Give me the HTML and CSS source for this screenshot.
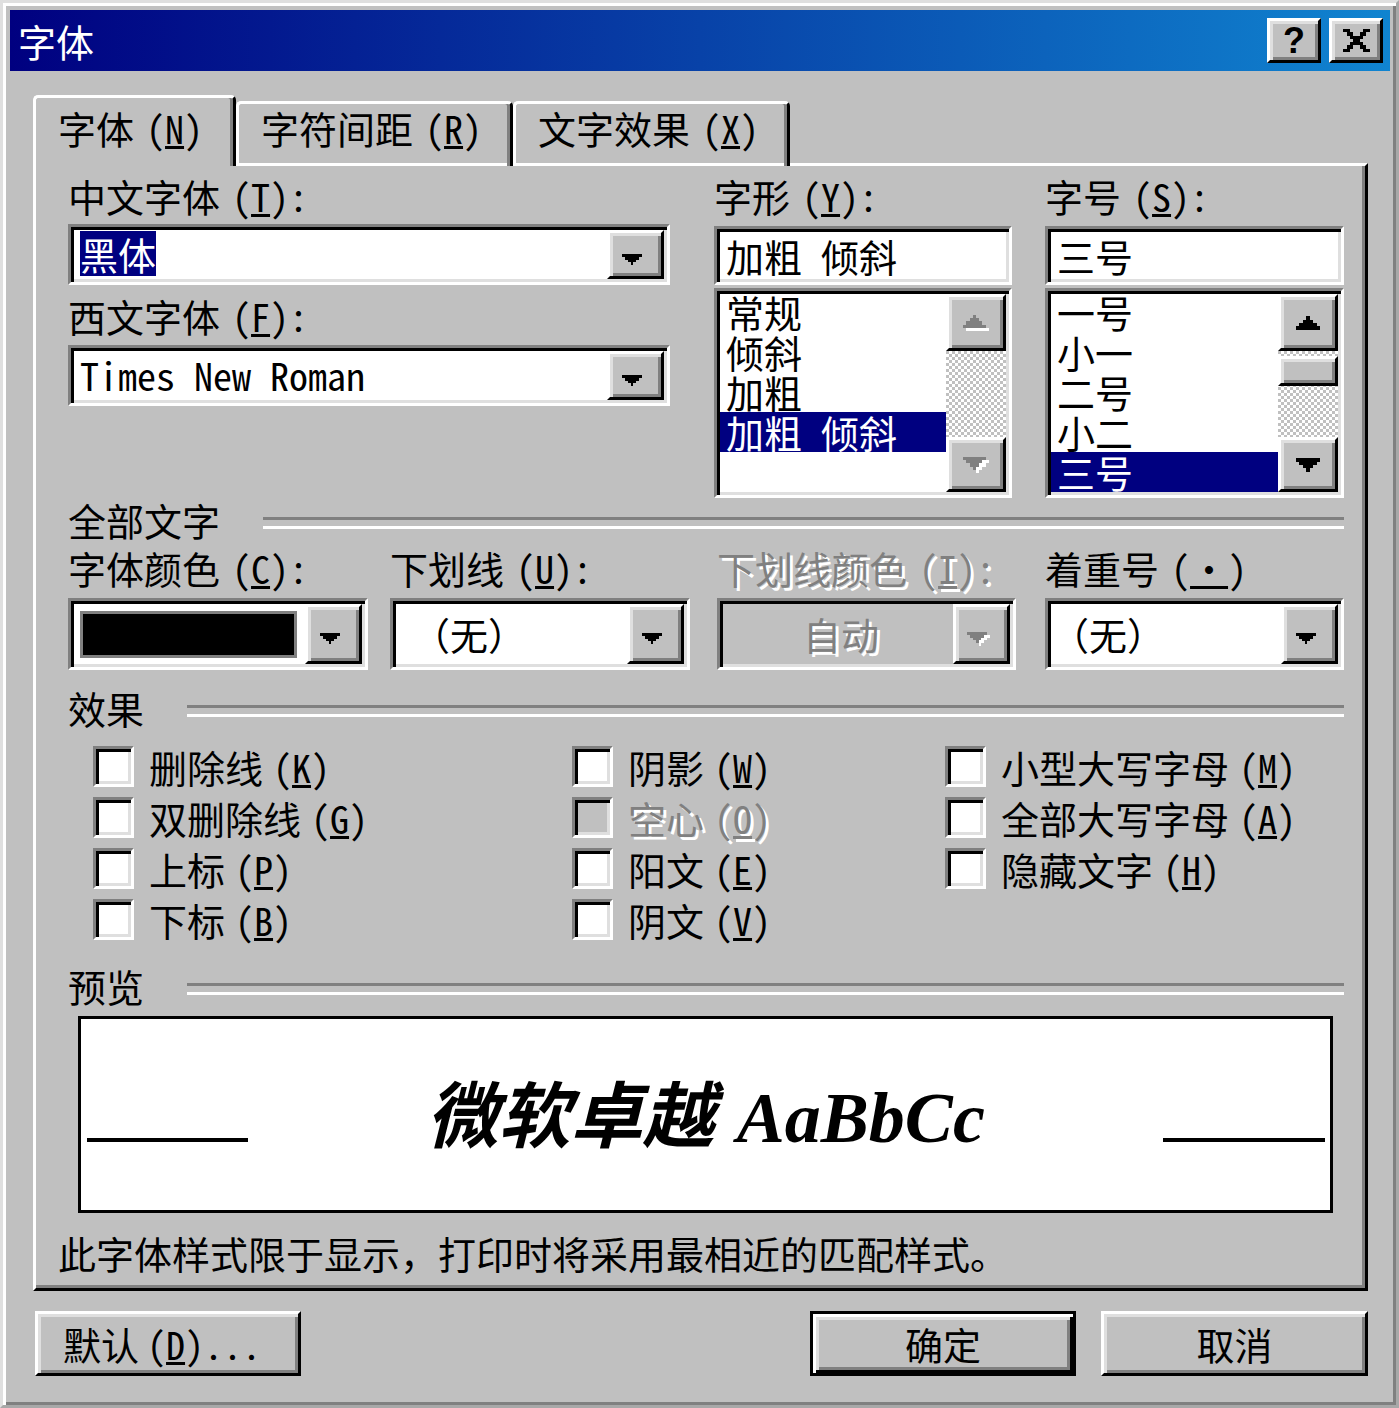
FILE: index.html
```html
<!DOCTYPE html>
<html lang="zh-CN">
  <head>
    <meta charset="UTF-8" />
    <title>字体</title>
    <link rel="stylesheet" href="styles.css">
  </head>
  <body>
    <div class="window">
      <div class="titlebar">
        <span class="title">字体</span>
        <button class="tbtn help">?</button>
        <button class="tbtn">
          <svg width="27" height="23" viewBox="0 0 8 7" shape-rendering="crispEdges"><path d="M0 0h2v1H0zM6 0h2v1H6zM1 1h2v1H1zM5 1h2v1H5zM2 2h4v1H2zM3 3h2v1H3zM2 4h4v1H2zM1 5h2v1H1zM5 5h2v1H5zM0 6h2v1H0zM6 6h2v1H6z" fill="#000"/></svg>
        </button>
      </div>

      <div class="tabs">
        <div class="tab active">字体<span class="k">(<u>N</u>)</span></div>
        <div class="tab">字符间距<span class="k">(<u>R</u>)</span></div>
        <div class="tab">文字效果<span class="k">(<u>X</u>)</span></div>
      </div>

      <div class="panel">
        <div class="top">
          <div class="col col-font">
            <div class="label">中文字体<span class="k">(<u>T</u>):</span></div>
            <div class="combo">
              <div class="text"><span class="hl">黑体</span></div>
              <div class="drop">
                <svg class="arr" width="20" height="11" viewBox="0 0 7 4" preserveAspectRatio="none" shape-rendering="crispEdges"><path d="M0 0h7v1H6v1H5v1H4v1H3V3H2V2H1V1H0z"/></svg>
              </div>
            </div>
            <div class="label second">西文字体<span class="k">(<u>F</u>):</span></div>
            <div class="combo combo-b">
              <div class="text hw">Times New Roman</div>
              <div class="drop">
                <svg class="arr" width="20" height="11" viewBox="0 0 7 4" preserveAspectRatio="none" shape-rendering="crispEdges"><path d="M0 0h7v1H6v1H5v1H4v1H3V3H2V2H1V1H0z"/></svg>
              </div>
            </div>
          </div>

          <div class="col col-style">
            <div class="label">字形<span class="k">(<u>Y</u>):</span></div>
            <div class="field hw">加粗 倾斜</div>
            <div class="list">
              <ul>
                <li>常规</li>
                <li>倾斜</li>
                <li>加粗</li>
                <li class="sel hw">加粗 倾斜</li>
              </ul>
              <div class="scroll">
                <div class="sbtn up">
                  <svg width="26" height="16" viewBox="0 0 8 5" shape-rendering="crispEdges"><path d="M4 1h1v1h1v1h1v1h1v1H1V4h1V3h1V2h1z" fill="#fff"/><path d="M3 0h1v1h1v1h1v1h1v1H0V3h1V2h1V1h1z" fill="#808080"/></svg>
                </div>
                <div class="track"></div>
                <div class="sbtn down">
                  <svg width="26" height="16" viewBox="0 0 8 5" shape-rendering="crispEdges"><path d="M1 1h7v1H7v1H6v1H5v1H4V4H3V3H2V2H1z" fill="#fff"/><path d="M0 0h7v1H6v1H5v1H4v1H3V3H2V2H1V1H0z" fill="#808080"/></svg>
                </div>
              </div>
            </div>
          </div>

          <div class="col col-size">
            <div class="label">字号<span class="k">(<u>S</u>):</span></div>
            <div class="field">三号</div>
            <div class="list">
              <ul>
                <li>一号</li>
                <li>小一</li>
                <li>二号</li>
                <li>小二</li>
                <li class="sel">三号</li>
              </ul>
              <div class="scroll">
                <div class="sbtn up">
                  <svg width="24" height="14" viewBox="0 0 7 4" shape-rendering="crispEdges"><path d="M3 0h1v1h1v1h1v1h1v1H0V3h1V2h1V1h1z"/></svg>
                </div>
                <div class="track"><div class="thumb"></div></div>
                <div class="sbtn down">
                  <svg width="24" height="14" viewBox="0 0 7 4" shape-rendering="crispEdges"><path d="M0 0h7v1H6v1H5v1H4v1H3V3H2V2H1V1H0z"/></svg>
                </div>
              </div>
            </div>
          </div>
        </div>

        <div class="group">全部文字</div>

        <div class="row2">
          <div class="cell">
            <div class="label">字体颜色<span class="k">(<u>C</u>):</span></div>
            <div class="combo tall w300">
              <div class="text"><div class="swatch"></div></div>
              <div class="drop">
                <svg class="arr" width="20" height="11" viewBox="0 0 7 4" preserveAspectRatio="none" shape-rendering="crispEdges"><path d="M0 0h7v1H6v1H5v1H4v1H3V3H2V2H1V1H0z"/></svg>
              </div>
            </div>
          </div>
          <div class="cell">
            <div class="label">下划线<span class="k">(<u>U</u>):</span></div>
            <div class="combo tall w300">
              <div class="text indent">（无）</div>
              <div class="drop">
                <svg class="arr" width="20" height="11" viewBox="0 0 7 4" preserveAspectRatio="none" shape-rendering="crispEdges"><path d="M0 0h7v1H6v1H5v1H4v1H3V3H2V2H1V1H0z"/></svg>
              </div>
            </div>
          </div>
          <div class="cell">
            <div class="label dis">下划线颜色<span class="k">(<u>I</u>):</span></div>
            <div class="combo tall w299 disabled">
              <div class="text center dis">自动</div>
              <div class="drop">
                <svg class="arr" width="23" height="14" viewBox="0 0 8 5" preserveAspectRatio="none" shape-rendering="crispEdges"><path d="M1 1h7v1H7v1H6v1H5v1H4V4H3V3H2V2H1z" fill="#fff"/><path d="M0 0h7v1H6v1H5v1H4v1H3V3H2V2H1V1H0z" fill="#808080"/></svg>
              </div>
            </div>
          </div>
          <div class="cell">
            <div class="label">着重号<span class="k">(<u>·</u>)</span></div>
            <div class="combo tall w299">
              <div class="text flush">（无）</div>
              <div class="drop">
                <svg class="arr" width="20" height="11" viewBox="0 0 7 4" preserveAspectRatio="none" shape-rendering="crispEdges"><path d="M0 0h7v1H6v1H5v1H4v1H3V3H2V2H1V1H0z"/></svg>
              </div>
            </div>
          </div>
        </div>

        <div class="group fx">效果</div>

        <div class="checks">
          <div class="check"><span class="box"></span><span>删除线<span class="k">(<u>K</u>)</span></span></div>
          <div class="check"><span class="box"></span><span>双删除线<span class="k">(<u>G</u>)</span></span></div>
          <div class="check"><span class="box"></span><span>上标<span class="k">(<u>P</u>)</span></span></div>
          <div class="check"><span class="box"></span><span>下标<span class="k">(<u>B</u>)</span></span></div>
          <div class="check"><span class="box"></span><span>阴影<span class="k">(<u>W</u>)</span></span></div>
          <div class="check off"><span class="box"></span><span class="dis">空心<span class="k">(<u>O</u>)</span></span></div>
          <div class="check"><span class="box"></span><span>阳文<span class="k">(<u>E</u>)</span></span></div>
          <div class="check"><span class="box"></span><span>阴文<span class="k">(<u>V</u>)</span></span></div>
          <div class="check"><span class="box"></span><span>小型大写字母<span class="k">(<u>M</u>)</span></span></div>
          <div class="check"><span class="box"></span><span>全部大写字母<span class="k">(<u>A</u>)</span></span></div>
          <div class="check"><span class="box"></span><span>隐藏文字<span class="k">(<u>H</u>)</span></span></div>
        </div>

        <div class="group pv">预览</div>

        <div class="preview">
          <span class="pline"></span>
          <div class="sample"><span class="cjk">微软卓越</span> <span class="latin">AaBbCc</span></div>
          <span class="pline right"></span>
        </div>

        <p class="note">此字体样式限于显示，打印时将采用最相近的匹配样式。</p>
      </div>

      <div class="buttons">
        <button class="btn left">默认<span class="k">(<u>D</u>)...</span></button>
        <button class="btn default">确定</button>
        <button class="btn cancel">取消</button>
      </div>
    </div>
  </body>
</html>
```

FILE: styles.css
```css
* {
  box-sizing: border-box;
}

body {
  margin: 0;
  background: #c0c0c0;
  font-family: "Noto Sans CJK SC", sans-serif;
  font-size: 38px;
  color: #000;
}

u {
  text-decoration-thickness: 3px;
  text-underline-offset: 2px;
}

/* half-width latin, like the old bitmap system font */
.k,
.hw {
  font-feature-settings: "hwid" 1;
}

.k {
  margin-left: 12px;
}

.window {
  width: 1399px;
  height: 1408px;
  overflow: hidden;
  background: #c0c0c0;
  border: 3px solid;
  border-color: #dfdfdf #a8a8a8 #a8a8a8 #dfdfdf;
  box-shadow: inset 3px 3px #fff, inset -3px -3px #808080;
  padding: 7px 6px 0 7px;
}

/* title bar */
.titlebar {
  height: 61px;
  display: flex;
  align-items: center;
  padding: 0 7px 0 8px;
  background: linear-gradient(90deg, #000080, #1084d0);
}

.title {
  flex: 1;
  color: #fff;
  line-height: 61px;
}

.tbtn {
  width: 54px;
  height: 45px;
  margin-left: 8px;
  padding: 0;
  display: flex;
  align-items: center;
  justify-content: center;
  background: #c0c0c0;
  border: 3px solid;
  border-color: #fff #000 #000 #fff;
  box-shadow: inset 3px 3px #dfdfdf, inset -3px -3px #808080;
}

.tbtn.help {
  font-family: "Liberation Sans", sans-serif;
  font-weight: bold;
  font-size: 36px;
  line-height: 1;
}

/* tabs */
.tabs {
  display: flex;
  align-items: flex-end;
  margin: 24px 0 0 23px;
}

.tab {
  width: 277px;
  height: 65px;
  padding: 4px 0 0 22px;
  line-height: 40px;
  border: 3px solid;
  border-bottom: 0;
  border-color: #fff #000 #000 #fff;
  border-radius: 5px 5px 0 0;
  box-shadow: inset -3px 0 #808080;
  white-space: nowrap;
}

.tab.active {
  width: 203px;
  height: 71px;
  padding-top: 10px;
  position: relative;
  z-index: 1;
  background: #c0c0c0;
}

.panel {
  width: 1335px;
  margin: -3px 0 0 23px;
  padding: 10px 21px 15px 32px;
  border: 3px solid;
  border-color: #fff #000 #000 #fff;
  box-shadow: inset -3px -3px #808080;
}

.label {
  line-height: 40px;
  white-space: nowrap;
}

.label.second {
  margin-top: 11px;
}

.dis {
  color: #808080;
  text-shadow: 3px 3px #fff;
}

/* top: font, style, size */
.top {
  display: flex;
}

.col-font {
  width: 602px;
}

.col-style {
  width: 298px;
  margin-left: 44px;
}

.col-size {
  width: 299px;
  margin-left: 33px;
}

.combo,
.field,
.list,
.box {
  border: 3px solid;
  border-color: #808080 #fff #fff #808080;
  box-shadow: inset 3px 3px #000, inset -3px -3px #dfdfdf;
  background: #fff;
}

.combo {
  height: 61px;
  margin-top: 8px;
  padding: 3px;
  display: flex;
}

.combo-b {
  margin-top: 9px;
}

.combo .text {
  flex: 1;
  padding-left: 6px;
  line-height: 48px;
  white-space: nowrap;
}

.hl {
  display: inline-block;
  line-height: 45px;
  background: #000080;
  color: #fff;
}

.drop,
.sbtn,
.thumb {
  background: #c0c0c0;
  border: 3px solid;
  border-color: #fff #000 #000 #fff;
  box-shadow: inset 3px 3px #dfdfdf, inset -3px -3px #808080;
}

.drop {
  width: 57px;
  display: flex;
  align-items: center;
  justify-content: center;
}

.drop .arr {
  margin: 9px 7px 0 0;
}

.field {
  height: 59px;
  margin-top: 10px;
  padding: 3px 3px 3px 9px;
  line-height: 47px;
  white-space: pre;
}

.list {
  height: 210px;
  margin-top: 3px;
  padding: 3px;
  display: flex;
  overflow: hidden;
}

.list ul {
  flex: 1;
  margin: -2px 0 0;
  padding: 0;
  list-style: none;
  overflow: hidden;
}

.list li {
  height: 40px;
  line-height: 40px;
  padding-left: 6px;
  white-space: pre;
}

.list li.sel {
  background: #000080;
  color: #fff;
}

.scroll {
  width: 60px;
  display: flex;
  flex-direction: column;
}

.sbtn {
  height: 57px;
  display: flex;
  align-items: center;
  justify-content: center;
}

.sbtn.down {
  height: 55px;
}

.track {
  flex: 1;
  background: repeating-conic-gradient(#fff 0 25%, #c0c0c0 0 50%) 0 0 / 6px 6px;
}

.thumb {
  height: 30px;
  margin-top: 5px;
}

/* group headings */
.group {
  display: flex;
  align-items: center;
  line-height: 40px;
  margin-top: 2px;
  white-space: nowrap;
}

.group::after {
  content: "";
  flex: 1;
  height: 6px;
  margin: 6px 0 0 43px;
  border-top: 3px solid #808080;
  border-bottom: 3px solid #fff;
}

.group.fx {
  margin-top: 18px;
}

.group.pv {
  margin-top: 21px;
}

/* second row of combos */
.row2 {
  display: grid;
  grid-template-columns: 322px 327px 328px 299px;
  margin-top: 8px;
}

.combo.tall {
  height: 72px;
  margin-top: 10px;
}

.combo.tall .text {
  line-height: 60px;
}

.w300 {
  width: 300px;
}

.w299 {
  width: 299px;
}

.combo .text.indent {
  padding-left: 16px;
}

.combo .text.flush {
  padding-left: 0;
}

.combo .text.center {
  text-align: center;
}

.combo.disabled {
  background: #c0c0c0;
}

.swatch {
  width: 217px;
  height: 47px;
  margin-top: 7px;
  background: #000;
  border: 3px solid #808080;
}

/* effects */
.checks {
  display: grid;
  grid-auto-flow: column;
  grid-template-rows: repeat(4, 51px);
  grid-template-columns: 479px 373px 1fr;
  padding-left: 25px;
  margin-top: 13px;
}

.check {
  display: flex;
  align-items: center;
  gap: 15px;
  line-height: 40px;
  white-space: nowrap;
}

.check .k {
  margin-left: 10px;
}

.box {
  width: 41px;
  height: 41px;
  flex: none;
}

.check.off .box {
  background: #c0c0c0;
}

/* preview */
.preview {
  width: 1255px;
  height: 197px;
  margin: 10px 0 0 10px;
  border: 3px solid #000;
  background: #fff;
  display: grid;
  grid-template-columns: 1fr auto 1fr;
}

.pline {
  width: 161px;
  height: 4px;
  margin: 0 0 68px 6px;
  align-self: end;
  background: #000;
}

.pline.right {
  width: 162px;
  margin: 0 5px 68px 0;
  justify-self: end;
}

.sample {
  align-self: center;
  white-space: nowrap;
  font-weight: bold;
  font-style: italic;
  line-height: 1;
}

.sample .cjk {
  font-size: 72px;
}

.sample .latin {
  margin-left: 14px;
  font-family: "Liberation Serif", serif;
  font-size: 72px;
}

.note {
  margin: 20px 0 0 -10px;
  line-height: 40px;
  white-space: nowrap;
}

/* bottom buttons */
.buttons {
  display: flex;
  width: 1333px;
  margin: 20px 0 0 25px;
}

.btn {
  width: 266px;
  height: 65px;
  padding: 0;
  font: inherit;
  line-height: 40px;
  color: #000;
  background: #c0c0c0;
  border: 3px solid;
  border-color: #fff #000 #000 #fff;
  box-shadow: inset 3px 3px #dfdfdf, inset -3px -3px #808080;
}

.btn.left {
  text-align: left;
  padding-left: 25px;
}

.btn .k {
  margin-left: 8px;
}

.btn.default {
  margin-left: auto;
  border-color: #000;
  box-shadow: inset 3px 3px #fff, inset -3px -3px #000, inset 6px 6px #dfdfdf, inset -6px -6px #808080;
}

.btn.cancel {
  width: 267px;
  margin-left: 25px;
}
```
